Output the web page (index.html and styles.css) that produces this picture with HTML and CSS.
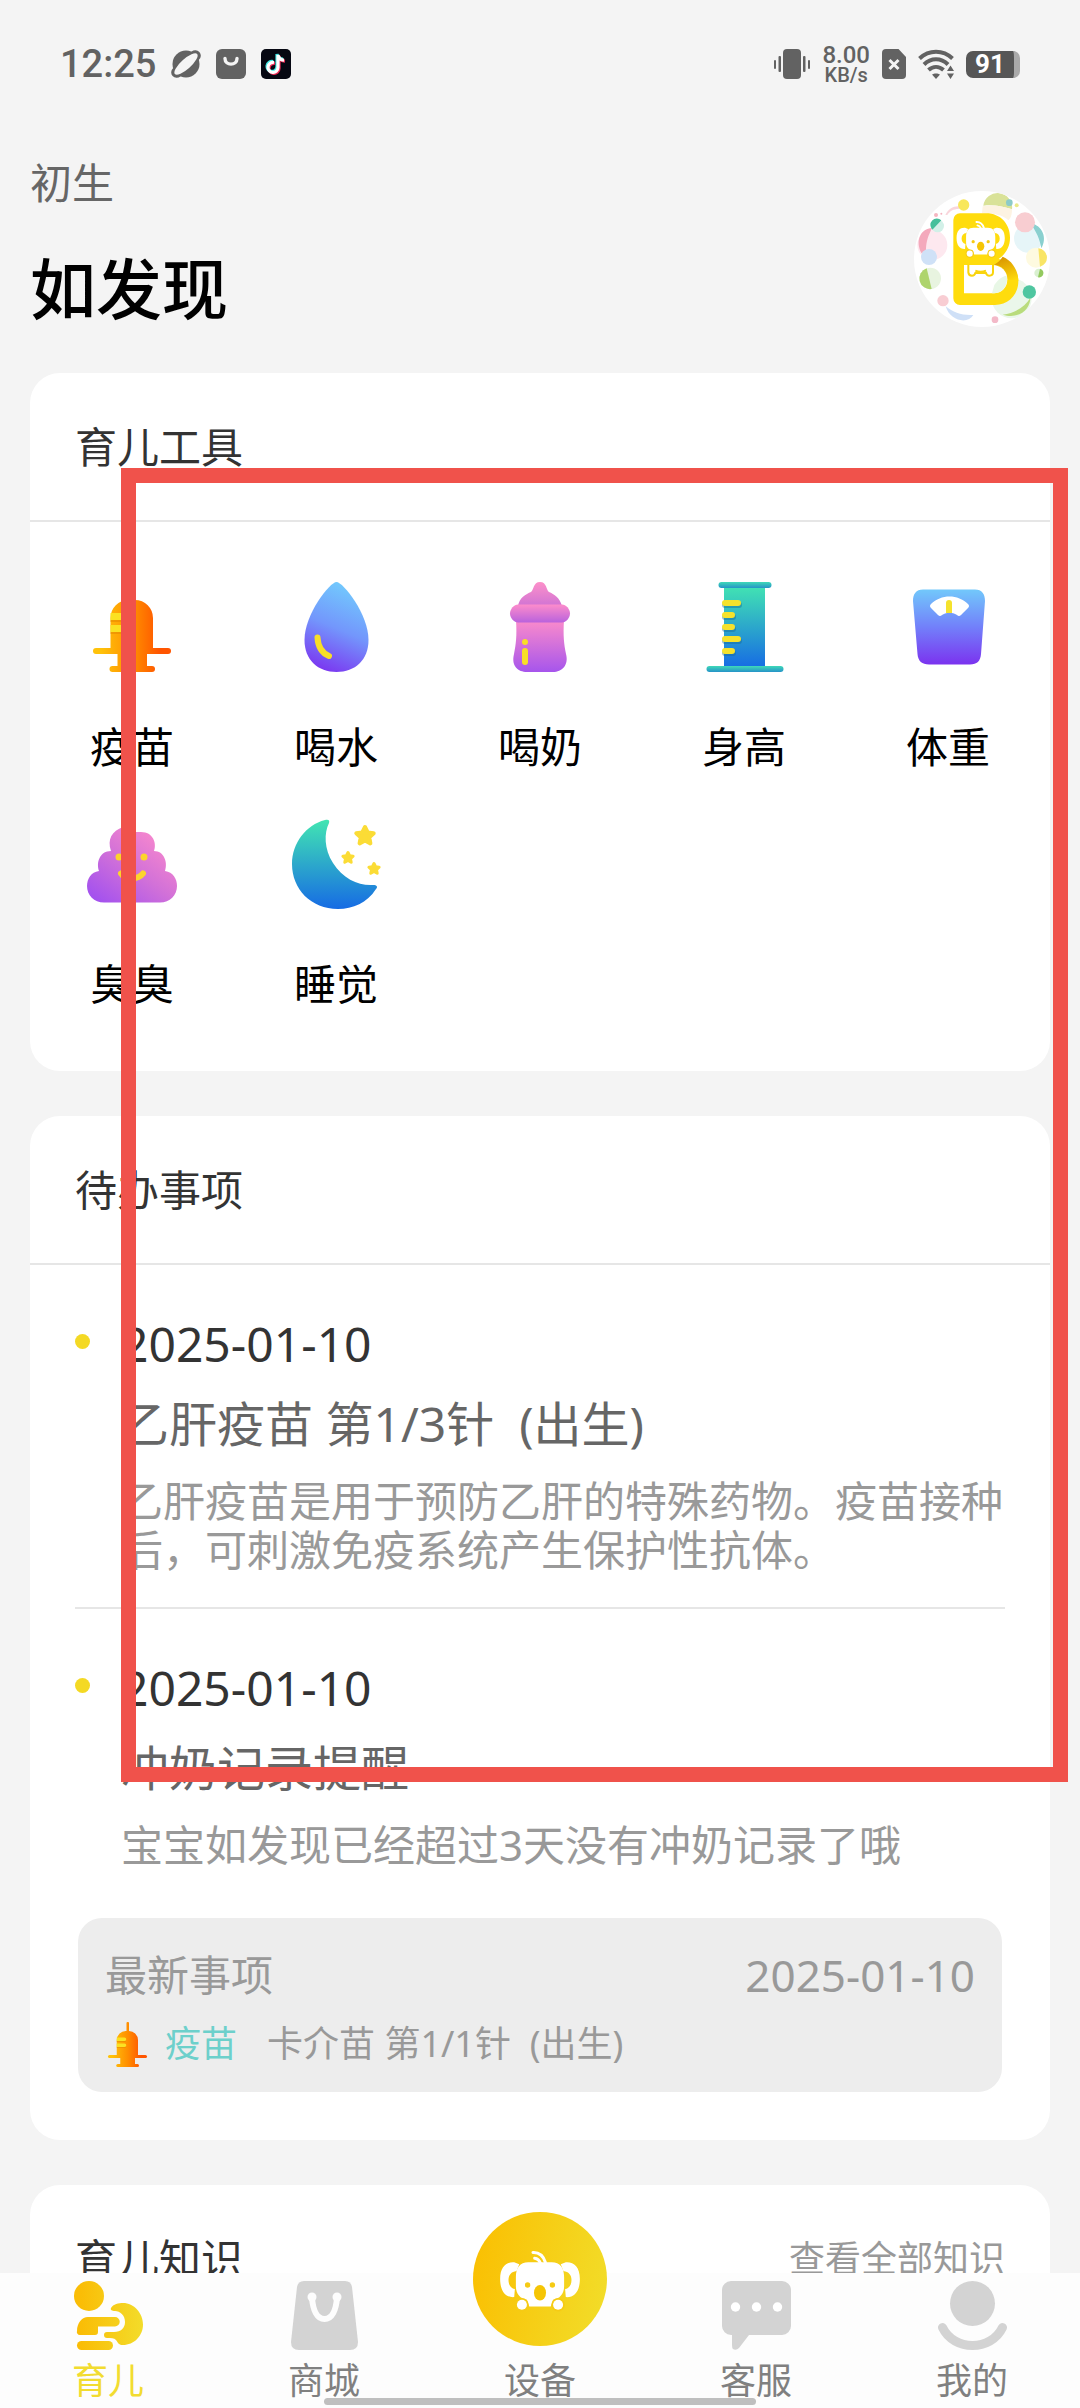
FILE: index.html
```html
<!DOCTYPE html>
<html lang="zh-CN">
<head>
<meta charset="utf-8">
<meta name="viewport" content="width=device-width, initial-scale=1">
<title>育儿</title>
<link rel="stylesheet" href="styles.css">
</head>
<body>
<svg class="defs" aria-hidden="true">
  <defs>
    <linearGradient id="g-orange" gradientUnits="userSpaceOnUse" x1="6" y1="0" x2="84" y2="0"><stop offset="0.1" stop-color="#ffc20a"/><stop offset="0.5" stop-color="#ff8f00"/><stop offset="0.85" stop-color="#ff5500"/></linearGradient>
    <linearGradient id="g-drop" x1="0.6" y1="0" x2="0.3" y2="1"><stop offset="0" stop-color="#72cbfd"/><stop offset="0.5" stop-color="#7396fc"/><stop offset="1" stop-color="#7b35f0"/></linearGradient>
    <linearGradient id="g-pink" x1="0" y1="0" x2="0" y2="1"><stop offset="0" stop-color="#fb8bcb"/><stop offset="1" stop-color="#a655ec"/></linearGradient>
    <linearGradient id="g-band" x1="0" y1="0" x2="0" y2="1"><stop offset="0" stop-color="#fd8ccb"/><stop offset="1" stop-color="#b962dd"/></linearGradient>
    <linearGradient id="g-dome" x1="0" y1="0" x2="0" y2="1"><stop offset="0" stop-color="#fd90c9"/><stop offset="1" stop-color="#d074d4"/></linearGradient>
    <linearGradient id="g-poop" gradientUnits="userSpaceOnUse" x1="70" y1="10" x2="15" y2="84"><stop offset="0" stop-color="#fb8acc"/><stop offset="0.5" stop-color="#d271d8"/><stop offset="1" stop-color="#a452ee"/></linearGradient>
    <linearGradient id="g-teal" x1="0" y1="0" x2="0" y2="1"><stop offset="0" stop-color="#42e5b2"/><stop offset="1" stop-color="#166be4"/></linearGradient>
    <linearGradient id="g-rim" x1="0" y1="0" x2="0" y2="1"><stop offset="0" stop-color="#3fd9b8"/><stop offset="1" stop-color="#2693c8"/></linearGradient>
    <linearGradient id="g-scale" x1="0" y1="0" x2="0" y2="1"><stop offset="0" stop-color="#72c8fb"/><stop offset="0.5" stop-color="#7280fa"/><stop offset="1" stop-color="#7b33ef"/></linearGradient>
    <linearGradient id="g-gold" gradientUnits="userSpaceOnUse" x1="0" y1="0" x2="69" y2="0"><stop offset="0.1" stop-color="#fabd06"/><stop offset="1" stop-color="#f3dc2a"/></linearGradient>
    <linearGradient id="g-disc" x1="0" y1="0.4" x2="1" y2="0.6"><stop offset="0" stop-color="#fac003"/><stop offset="1" stop-color="#f2dc28"/></linearGradient>
    <linearGradient id="g-loop" gradientUnits="userSpaceOnUse" x1="310" y1="235" x2="335" y2="310"><stop offset="0" stop-color="#d99500"/><stop offset="1" stop-color="#ffdc0d"/></linearGradient>
    <symbol id="vaccine" viewBox="0 0 90 90">
      <g fill="url(#g-orange)">
        <rect x="43" y="0" width="5" height="22" rx="2"/>
        <path d="M23.5 66V36a18 18 0 0 1 18-18h6.500a18 18 0 0 1 18 18v30z"/>
        <rect x="6" y="66" width="78" height="6" rx="3"/>
        <path d="M30.500 72h29.500v12h-29.500z"/>
        <rect x="22.500" y="84" width="45.500" height="6" rx="3"/>
      </g>
      <path d="M23.500 38h18v2h-18zM23.500 50h18v2h-18z" fill="#e88a00" opacity=".6"/>
      <path d="M23.500 31H39a3 3 0 0 1 0 7H23.500zM23.500 43H39a3 3 0 0 1 0 7H23.500z" fill="#fbe122"/>
    </symbol>
    <symbol id="koala" viewBox="115 150 250 190">
      <path d="M163 190C140 188 121 203 121 240C121 275 136 296 163 294L165 270C152 268 146 256 146 243C146 228 154 218 170 216L178 196Z" fill="#fff"/>
      <path d="M317 190C340 188 359 203 359 240C359 275 344 296 317 294L315 270C328 268 334 256 334 243C334 228 326 218 310 216L302 196Z" fill="#fff"/>
      <path d="M219 161C238 160 250 172 256 190M224 178C232 179 238 184 241 192" fill="none" stroke="#fff" stroke-width="9" stroke-linecap="round"/>
      <path d="M205 190H275C300 190 312 206 312 235V262C312 285 298 300 279 302L272 322H208L201 302C182 300 168 285 168 262V235C168 206 180 190 205 190Z" fill="#fff"/>
      <circle cx="186" cy="317" r="20" fill="#f6cb14"/><circle cx="294" cy="317" r="20" fill="#f6cb14"/>
      <circle cx="186" cy="317" r="15" fill="#fff"/><circle cx="294" cy="317" r="15" fill="#fff"/>
      <circle cx="203" cy="258" r="8" fill="#f6cb14"/><circle cx="277" cy="258" r="8" fill="#f6cb14"/>
      <ellipse cx="240" cy="281" rx="18" ry="23" fill="#f5c505"/>
    </symbol>
  </defs>
</svg>

<div class="app">
  <main class="content">
    <div class="status">
      <div class="status-group status-left">
        <span class="clock">12:25</span>
        <svg width="30" height="30" viewBox="0 0 30 30"><circle cx="15" cy="15" r="13.500" fill="#626262"/><g transform="rotate(-42 15 15)"><rect x="-3" y="9.500" width="36" height="11" rx="5.500" fill="#626262"/><ellipse cx="15" cy="15" rx="15" ry="5" fill="#f4f4f4"/></g></svg>
        <svg width="30" height="30" viewBox="0 0 30 30"><rect width="30" height="30" rx="6" fill="#626262"/><path d="M9 9.500C9 17 21 17 21 9.500" fill="none" stroke="#f4f4f4" stroke-width="3.400" stroke-linecap="round"/></svg>
        <svg width="30" height="30" viewBox="0 0 30 30"><rect width="30" height="30" rx="5" fill="#060812"/><g fill="none" stroke-width="3.200"><path d="M13 13.500a5 5 0 1 0 4 5V6c.5 3 2.500 5 6 5.200" stroke="#ef2a55" transform="translate(1 1)"/><path d="M13 13.500a5 5 0 1 0 4 5V6c.5 3 2.500 5 6 5.200" stroke="#3ce8e4" transform="translate(-1 -1)"/><path d="M13 13.500a5 5 0 1 0 4 5V6c.5 3 2.500 5 6 5.200" stroke="#fff"/></g></svg>
      </div>
      <div class="status-group status-right">
        <svg width="36" height="30" viewBox="0 0 36 30" fill="#626262"><rect x="9" width="18" height="30" rx="4"/><rect x="0" y="11" width="2" height="9" rx="1"/><rect x="4.500" y="7" width="2.500" height="16" rx="1"/><rect x="29" y="7" width="2.500" height="16" rx="1"/><rect x="34" y="11" width="2" height="9" rx="1"/></svg>
        <span class="speed"><span class="speed-value">8.00</span><span class="speed-unit">KB/s</span></span>
        <svg width="24" height="30" viewBox="0 0 24 30"><path d="M4 0H16.500L24 8V26a4 4 0 0 1-4 4H4a4 4 0 0 1-4-4V4a4 4 0 0 1 4-4Z" fill="#626262"/><path d="M7.500 11l9 9M16.500 11l-9 9" stroke="#f4f4f4" stroke-width="3"/></svg>
        <svg width="36" height="30" viewBox="0 0 36 30"><g fill="none" stroke="#626262" stroke-width="4"><path d="M1.500 9.500C11 .5 25 .5 34.500 9.500"/><path d="M6 15.500C13 8.500 23 8.500 30 15.500"/><path d="M10.500 21C15 17 21 17 25.500 21"/></g><path d="M14 25.500C16 24 20 24 22 25.500L18 30Z" fill="#626262"/><path d="M28 19h8v11h-8z" fill="#f4f4f4"/><path d="M29 22l3.500-5.500L36 22ZM29 24.500h7L32.500 30Z" fill="#626262"/></svg>
        <span class="battery">91</span>
      </div>
    </div>

    <header class="profile">
      <div class="profile-text">
        <p class="age">初生</p>
        <h1 class="name">如发现</h1>
      </div>
      <svg class="avatar" viewBox="42 38 408 408">
        <clipPath id="face"><circle cx="246" cy="242" r="204"/></clipPath>
        <circle cx="246" cy="242" r="204" fill="#fff"/>
        <g clip-path="url(#face)">
          <path d="M250 82A43 43 0 0 1 336 93C310 84 280 78 250 82Z" fill="#d9e298"/>
          <path d="M248 84C280 77 312 84 336 93C336 110 332 120 325 126C300 100 265 112 246 104Z" fill="#fdf3e2"/>
          <circle cx="328" cy="73" r="10" fill="#8ccbc8"/><circle cx="350" cy="81" r="6" fill="#ebe98a"/>
          <path d="M136 110C145 92 160 82 180 84L176 92C160 92 150 98 142 110Z" fill="#f9d6dc"/><circle cx="191" cy="80" r="17" fill="#f8e75a"/>
          <circle cx="108" cy="110" r="6" fill="#f5b5c0"/><circle cx="124" cy="106" r="3" fill="#f5b5c0"/>
          <circle cx="97" cy="200" r="45" fill="#fde8ef"/><path d="M97 149C60 150 45 190 65 225L78 215C78 190 85 170 97 149Z" fill="#f4a9bc"/>
          <circle cx="113" cy="143" r="19" fill="#d2f0e8"/><path d="M124 126A19 19 0 0 0 97 154Z" fill="#45bf9b"/>
          <circle cx="87" cy="236" r="24" fill="#cfe1f7"/>
          <circle cx="91" cy="300" r="32" fill="#e8f4e0"/><path d="M80 270A32 32 0 0 0 95 332Z" fill="#aed46c"/>
          <circle cx="385" cy="180" r="43" fill="#e6f5f8"/><path d="M390 133C430 142 442 180 424 210C420 185 410 160 390 133Z" fill="#8ad0cf"/>
          <circle cx="375" cy="132" r="30" fill="#f8cdd1"/>
          <circle cx="408" cy="238" r="30" fill="#fefae0"/><path d="M415 210A28 28 0 0 1 420 265Z" fill="#f9e566"/>
          <circle cx="416" cy="284" r="13" fill="#d9f0d0"/><path d="M420 271A13 13 0 0 1 414 297Z" fill="#93c95f"/>
          <circle cx="335" cy="360" r="60" fill="#eaf7ea"/>
          <path d="M308 409C345 405 375 385 391 358C392 385 365 425 308 409Z" fill="#b9dc7c"/><circle cx="388" cy="341" r="20" fill="#4fc6a0"/>
          <circle cx="129" cy="367" r="17" fill="#f8cdd3"/><path d="M137 384C160 402 185 412 220 410C205 438 150 430 137 384Z" fill="#cfe0f7"/>
          <circle cx="285" cy="424" r="10" fill="#f3b9c8"/>
        </g>
        <path d="M180 105H258C302 105 330 137 330 178C330 206 316 228 296 242C335 250 355 278 355 308C355 350 325 380 285 380H180A20 20 0 0 1 160 360V125A20 20 0 0 1 180 105Z" fill="#ffdc0d"/>
        <path d="M308 235C338 247 355 278 355 308L322 303C322 280 305 260 282 259C294 252 302 245 308 235Z" fill="url(#g-loop)"/>
        <path d="M192 260H275C305 260 322 280 322 303C322 328 305 345 282 345H192Z" fill="#fff"/>
        <path d="M283 320C295 303 306 294 320 292C325 320 310 343 282 345H276Z" fill="#e8f7e6"/>
        <path d="M205 259V282Q206 292 216 292Q224 292 226 284H258Q260 292 268 292Q279 292 279 282V259M226 277Q242 284 258 277" fill="none" stroke="#f9d40c" stroke-width="6"/>
        <use href="#koala" x="166" y="124" width="152" height="116"/>
      </svg>
    </header>

    <section class="card">
      <div class="card-head"><h2>育儿工具</h2></div>
      <div class="tools">
        <button type="button" class="tool"><svg class="tool-icon"><use href="#vaccine"/></svg><span>疫苗</span></button>
        <button type="button" class="tool"><svg class="tool-icon" viewBox="0 0 90 90"><path d="M45.500 0C52 0 77.500 32 77.500 58C77.500 78 64 90 45.500 90C27 90 13.500 78 13.500 58C13.500 32 39 0 45.500 0Z" fill="url(#g-drop)"/><path d="M26.500 55.500C27 64 31 71 38 74" fill="none" stroke="#f8de28" stroke-width="6" stroke-linecap="round"/></svg><span>喝水</span></button>
        <button type="button" class="tool"><svg class="tool-icon" viewBox="0 0 90 90"><path d="M23 24C24 16 31 12 36 10C39 8 38 0 45 0C52 0 51 8 54 10C59 12 65 16 67 24Z" fill="url(#g-dome)"/><path d="M21 38H69C68 54 69 62 71 72C74 83 67 90 58 90H32C23 90 16 84 19 72C21 62 22 54 21 38Z" fill="url(#g-pink)"/><path d="M23 22.500H67C71 22.500 75 27 75 31.500C75 36 71 40.500 67 40.500H23C19 40.500 15 36 15 31.500C15 27 19 22.500 23 22.500Z" fill="url(#g-band)"/><circle cx="30" cy="60" r="3" fill="#f8de28"/><path d="M30 69V80" stroke="#f8de28" stroke-width="6" stroke-linecap="round"/></svg><span>喝奶</span></button>
        <button type="button" class="tool"><svg class="tool-icon" viewBox="0 0 90 90"><rect x="25" y="3" width="41" height="83" fill="url(#g-teal)"/><rect x="19.500" y="0" width="53" height="6" rx="3" fill="url(#g-rim)"/><rect x="7.500" y="84" width="77" height="6" rx="3" fill="url(#g-rim)"/><path d="M25 21H39M25 33H33M25 45H33M25 57H39M25 69H33" stroke="#176a9c" stroke-width="6" stroke-linecap="round" opacity=".45" transform="translate(1 2)"/><path d="M26 21H39M26 33H33M26 45H33M26 57H39M26 69H33" stroke="#f5e22c" stroke-width="6" stroke-linecap="round"/></svg><span>身高</span></button>
        <button type="button" class="tool"><svg class="tool-icon" viewBox="0 0 90 90"><path d="M20 7.500H72C79 7.500 82 12 82 19L78 72C77.500 79 74 82.500 67 82.500H26C19 82.500 15 79 14.500 72L10 19C10 12 13 7.500 20 7.500Z" fill="url(#g-scale)"/><path d="M28 22C38 12 55 12 65 22Q67 24 65 26L58 33Q56 35 54 33C49 30 44 30 39 33Q37 35 35 33L28 26Q26 24 28 22Z" fill="#fff"/><path d="M43 31V21a3 3 0 0 1 6 0V31Z" fill="#f5e22c"/></svg><span>体重</span></button>
        <button type="button" class="tool"><svg class="tool-icon" viewBox="0 0 90 90"><path d="M36 8C40 6 44 10 44 13H54C66 13 70 24 67 32C77 32 81 43 78 52C86 53 90 60 90 67C90 76 83 83.500 73 83.500H17C7 83.500 0 76 0 67C0 60 4 53 12 52C9 43 13 32 24 32C20 20 25 12 36 8Z" fill="url(#g-poop)"/><circle cx="32" cy="38" r="3.500" fill="#fcd42c"/><circle cx="57" cy="38" r="3.500" fill="#fcd42c"/><path d="M34 54.500C38 61 51 61 56 54.500" fill="none" stroke="#fcd42c" stroke-width="6" stroke-linecap="round"/></svg><span>臭臭</span></button>
        <button type="button" class="tool"><svg class="tool-icon" viewBox="0 0 90 90"><path d="M34 1C37 0 39 1 38 4C33 14 33 30 42 44C52 60 68 67 82 66C86 66 87 68 85 70C76 84 62 90 47 90C20 90 1 70 1 45C1 24 15 6 34 1Z" fill="url(#g-teal)"/><g fill="#fbdc35" stroke="#fbdc35" stroke-width="4" stroke-linejoin="round"><path d="M74 8l2.700 5.400 6 .8-4.400 4.200 1.100 6-5.400-2.900-5.400 2.900 1.100-6-4.400-4.200 6-.8z"/></g><g fill="#fbdc35" stroke="#fbdc35" stroke-width="3" stroke-linejoin="round"><path d="M57 33.500l1.600 3.200 3.500.5-2.600 2.500.7 3.500-3.200-1.700-3.200 1.700.7-3.500-2.600-2.500 3.500-.5zM83 44.500l1.600 3.200 3.500.5-2.600 2.500.7 3.500-3.200-1.700-3.200 1.700.7-3.500-2.600-2.500 3.500-.5z"/></g></svg><span>睡觉</span></button>
      </div>
    </section>

    <section class="card todo-card">
      <div class="card-head"><h2>待办事项</h2></div>
      <ul class="todos">
        <li class="todo">
          <div class="todo-text">
            <time class="todo-date" datetime="2025-01-10">2025-01-10</time>
            <h3 class="todo-title">乙肝疫苗 第1/3针&nbsp; (出生)</h3>
            <p class="todo-desc">乙肝疫苗是用于预防乙肝的特殊药物。疫苗接种后，可刺激免疫系统产生保护性抗体。</p>
          </div>
        </li>
        <li class="todo">
          <div class="todo-text">
            <time class="todo-date" datetime="2025-01-10">2025-01-10</time>
            <h3 class="todo-title">冲奶记录提醒</h3>
            <p class="todo-desc">宝宝如发现已经超过3天没有冲奶记录了哦</p>
          </div>
        </li>
      </ul>
      <div class="latest">
        <div class="latest-head"><span>最新事项</span><time class="latest-date" datetime="2025-01-10">2025-01-10</time></div>
        <div class="latest-row"><svg class="latest-icon"><use href="#vaccine"/></svg><span class="latest-tag">疫苗</span><span class="latest-name">卡介苗 第1/1针&nbsp; (出生)</span></div>
      </div>
    </section>

    <section class="card">
      <div class="card-head"><h2>育儿知识</h2><a class="more" href="#all">查看全部知识</a></div>
      <div class="articles"></div>
    </section>

    <div class="marker"></div>
  </main>

  <nav class="tabs">
    <a class="tab active" href="#parenting"><svg class="tab-icon" viewBox="0 0 69 69"><g fill="url(#g-gold)"><circle cx="15" cy="15" r="15"/><path d="M3 50C3 42 8 36 14 36H41a4.700 4.700 0 0 1 0 9.500H24V51a3 3 0 0 1-3 3H6a3 3 0 0 1-3-4Z"/><rect x="3" y="60" width="36" height="9" rx="4.500"/><path d="M37 27C39 23 45 22 49 22C60 22 69 32 69 43.500C69 55 60 64 49 64C45 64 44 62 42 59C40 57 37 57 33 57A3 3 0 0 1 33 51H40C47 51 51 47 51 41C51 34 46 30 41 30C38 30 36 29 37 27Z"/></g></svg><span>育儿</span></a>
    <a class="tab" href="#shop"><svg class="tab-icon" viewBox="0 0 69 69"><path d="M14 0H55Q61 0 62 6L68 61Q68 69 60 69H9Q1 69 1 61L7 6Q8 0 14 0Z" fill="#d3d3d3"/><path d="M22 17C23 29 27 38 34.500 38C42 38 46 29 47 17" fill="none" stroke="#fdfdfd" stroke-width="6"/><circle cx="22" cy="16" r="4.500" fill="#fdfdfd"/><circle cx="47" cy="16" r="4.500" fill="#fdfdfd"/></svg><span>商城</span></a>
    <a class="tab" href="#device"><svg class="tab-disc" viewBox="40 40 400 400"><circle cx="240" cy="240" r="200" fill="url(#g-disc)"/><use href="#koala" x="115" y="150" width="250" height="190"/></svg><span>设备</span></a>
    <a class="tab" href="#service"><svg class="tab-icon" viewBox="0 0 69 69"><path d="M9 0H60a9 9 0 0 1 9 9V45a9 9 0 0 1-9 9H27L17 67Q14 70 11 68Q10 67 10 64V54H9a9 9 0 0 1-9-9V9a9 9 0 0 1 9-9Z" fill="#d3d3d3"/><g fill="#fff"><circle cx="13.500" cy="26" r="4.700"/><circle cx="34.500" cy="26" r="4.700"/><circle cx="55.500" cy="26" r="4.700"/></g></svg><span>客服</span></a>
    <a class="tab" href="#me"><svg class="tab-icon" viewBox="0 0 69 69"><circle cx="34.500" cy="22.500" r="22.500" fill="#d3d3d3"/><path d="M4.500 46.500C16 70.500 53 70.500 64.500 46.500" fill="none" stroke="#d3d3d3" stroke-width="9" stroke-linecap="round"/></svg><span>我的</span></a>
    <div class="home-bar"></div>
  </nav>
</div>
</body>
</html>
```
FILE: styles.css
```css
* {
  box-sizing: border-box;
  margin: 0;
  padding: 0;
}

body {
  background: #f4f4f4;
  color: #333;
  font-family: "Noto Sans", "Noto Sans CJK SC", sans-serif;
  font-size: 42px;
  line-height: 60px;
}

h1, h2, h3 {
  font-weight: 400;
  font-size: inherit;
}

a {
  color: inherit;
  text-decoration: none;
}

button {
  border: 0;
  background: none;
  font: inherit;
  color: inherit;
}

ul {
  list-style: none;
}

.defs {
  position: absolute;
  width: 0;
  height: 0;
}

.app {
  display: flex;
  flex-direction: column;
  height: 100vh;
}

.content {
  position: relative;
  flex: 1;
  min-height: 0;
  overflow-y: auto;
  scrollbar-width: none;
  padding: 0 30px;
}

/* status bar */
.status {
  display: flex;
  justify-content: space-between;
  align-items: center;
  height: 128px;
  padding: 0 30px;
}

.status-group {
  display: flex;
  align-items: center;
}

.status-left {
  gap: 15px;
}

.status-right {
  gap: 12px;
}

.clock {
  color: #626262;
  font: 500 38px/48px Roboto, sans-serif;
}

.speed {
  display: flex;
  flex-direction: column;
  align-items: center;
  color: #626262;
  font-family: Roboto, sans-serif;
  font-weight: 500;
}

.speed-value {
  font-size: 24px;
  line-height: 22px;
}

.speed-unit {
  font-size: 20px;
  line-height: 18px;
}

/* filled battery body with a lighter cap at its right end */
.battery {
  width: 54px;
  border-right: 6px solid #aaa;
  border-radius: 7px;
  background: #565656;
  color: #fff;
  font: 700 26px/27px Roboto, sans-serif;
  text-align: center;
}

/* profile */
.profile {
  display: flex;
  justify-content: space-between;
  align-items: center;
  height: 245px;
  padding-top: 16px;
}

.profile-text {
  display: flex;
  flex-direction: column;
  gap: 30px;
  padding-bottom: 32px;
}

.age {
  color: #666;
}

.name {
  color: #000;
  font-size: 66px;
  font-weight: 500;
  line-height: 90px;
}

.avatar {
  width: 136px;
  height: 136px;
}

/* cards */
.card {
  margin-bottom: 45px;
  border-radius: 30px;
  background: #fff;
}

.card-head {
  display: flex;
  justify-content: space-between;
  align-items: center;
  height: 149px;
  padding: 0 45px;
  border-bottom: 2px solid #e6e6e6;
}

.more {
  color: #999;
  font-size: 36px;
}

.tools {
  display: grid;
  grid-template-columns: repeat(5, 1fr);
  row-gap: 42px;
  padding: 60px 0 57px;
  color: #000;
}

.tool {
  display: flex;
  flex-direction: column;
  align-items: center;
  gap: 45px;
}

.tool-icon {
  width: 90px;
  height: 90px;
}

.articles {
  height: 600px;
}

/* to-do list */
.todo-card {
  padding-bottom: 48px;
}

.todos {
  padding: 0 45px;
}

.todo {
  display: flex;
  gap: 31px;
  padding: 49px 0 33px;
  border-bottom: 2px solid #e6e6e6;
}

.todo:last-child {
  padding-bottom: 49px;
  border-bottom: 0;
}

.todo::before {
  content: "";
  flex: none;
  width: 15px;
  height: 15px;
  margin-top: 20px;
  border-radius: 50%;
  background: #f4d924;
}

.todo-date {
  display: block;
  font-size: 48px;
}

.todo-title {
  margin: 20px 0 22px;
  color: #666;
  font-size: 48px;
}

.todo-desc {
  color: #999;
  line-height: 49px;
}

.latest {
  display: flex;
  flex-direction: column;
  gap: 12px;
  margin: 0 48px;
  padding: 27px 27px 21px;
  border-radius: 24px;
  background: #ededed;
  color: #999;
}

.latest-head {
  display: flex;
  justify-content: space-between;
}

.latest-date {
  font-size: 44px;
}

.latest-row {
  display: flex;
  align-items: center;
  height: 54px;
  font-size: 36px;
}

.latest-icon {
  width: 45px;
  height: 45px;
}

.latest-tag {
  margin: 0 30px 0 15px;
  color: #6dd0cb;
}

/* highlight frame over the cards */
.marker {
  position: absolute;
  top: 468px;
  left: 121px;
  right: 12px;
  height: 1314px;
  border: 15px solid #f0524b;
}

/* tab bar */
.tabs {
  position: relative;
  display: grid;
  grid-template-columns: repeat(5, 1fr);
  grid-template-rows: 135px;
  background: #fdfdfd;
  color: #808080;
  font-size: 36px;
  line-height: 54px;
}

.tab {
  display: flex;
  flex-direction: column;
  align-items: center;
  justify-content: flex-end;
  gap: 4px;
}

.tab.active {
  color: #f2dc30;
}

.tab-icon {
  flex: none;
  width: 69px;
  height: 69px;
}

.tab-disc {
  flex: none;
  width: 134px;
  height: 134px;
  margin-bottom: 4px;
}

.home-bar {
  position: absolute;
  left: 30%;
  right: 30%;
  bottom: 3px;
  height: 7px;
  border-radius: 4px;
  background: #bfbfbf;
}
```
